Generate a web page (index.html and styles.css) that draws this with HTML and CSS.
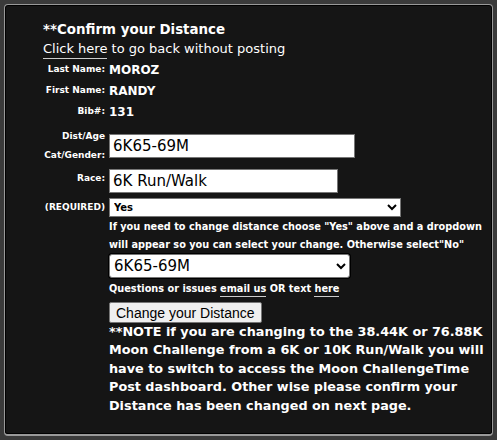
FILE: index.html
```html
<!DOCTYPE html>
<html lang="en">
<head>
  <meta charset="UTF-8">
  <meta name="viewport" content="width=device-width, initial-scale=1.0">
  <title>Confirm your Distance</title>
  <link rel="stylesheet" href="styles.css">
</head>
<body>
  <div class="panel">
    <div class="head">
      <div class="title">**Confirm your Distance</div>
      <div class="back"><a href="#" class="link">Click here</a> to go back without posting</div>
    </div>

    <div class="form">
      <div class="row info">
        <span class="lbl">Last Name:</span>
        <span class="val">MOROZ</span>
      </div>
      <div class="row info">
        <span class="lbl">First Name:</span>
        <span class="val">RANDY</span>
      </div>
      <div class="row info">
        <span class="lbl">Bib#:</span>
        <span class="val">131</span>
      </div>
      <div class="row dist">
        <span class="lbl">Dist/Age<br>Cat/Gender:</span>
        <input class="field field-dist" type="text" value="6K65-69M">
      </div>
      <div class="row race">
        <span class="lbl">Race:</span>
        <input class="field field-race" type="text" value="6K Run/Walk">
      </div>
      <div class="row req">
        <span class="lbl">(REQUIRED)</span>
        <select class="pick-yes">
          <option>Yes</option>
          <option>No</option>
        </select>
      </div>
      <div class="row">
        <span class="lbl"></span>
        <div class="rest">
          <p class="hint">If you need to change distance choose "Yes" above and a dropdown will appear so you can select your change. Otherwise select"No"</p>
          <select class="pick-dist">
            <option>6K65-69M</option>
            <option>10K65-69M</option>
            <option>38.44K65-69M</option>
            <option>76.88K65-69M</option>
          </select>
          <p class="hint ask">Questions or issues <a href="#" class="link">email us</a> OR text <a href="#" class="link">here</a></p>
          <button class="btn" type="button">Change your Distance</button>
          <p class="note">**NOTE if you are changing to the 38.44K or 76.88K Moon Challenge from a 6K or 10K Run/Walk you will have to switch to access the Moon ChallengeTime Post dashboard. Other wise please confirm your Distance has been changed on next page.</p>
        </div>
      </div>
    </div>
  </div>
</body>
</html>
```

FILE: styles.css
```css
html, body {
  margin: 0;
  background-color: #3a3a3a;
}

body {
  padding: 4px 4px 3px 4px;
  font-family: "DejaVu Sans", Verdana, sans-serif;
  color: #fff;
}

.panel {
  height: 432px;
  box-sizing: border-box;
  background-color: #151515;
  border: 1px solid #999;
  border-bottom-width: 2px;
  border-radius: 4px;
  box-shadow: inset 0 0 0 1px #000;
  padding: 15px 0 0 2px;
}

.head {
  padding-left: 36px;
  font-size: 13px;
  line-height: 19px;
}

.title {
  font-size: 13.4px;
  font-weight: bold;
}

.link {
  color: #fff;
  text-decoration: none;
  border-bottom: 1px solid #ccc;
  padding-bottom: 2px;
}

.form {
  display: flex;
  flex-direction: column;
  margin-top: 1px;
}

.row {
  display: flex;
  gap: 4px;
  align-items: flex-start;
}

.lbl {
  flex: 0 0 98px;
  text-align: right;
  font-weight: bold;
  font-size: 9px;
  line-height: 19px;
}

.info {
  height: 21px;
  align-items: center;
}

.val {
  font-weight: bold;
  font-size: 12px;
}

.dist {
  margin-top: 5px;
  align-items: center;
}

.field {
  box-sizing: border-box;
  height: 24px;
  margin: 0;
  border: 1px solid #767676;
  padding: 0 3px;
  background: #fff;
  color: #000;
  font-family: "DejaVu Sans", Verdana, sans-serif;
  font-size: 15px;
}

.field-dist {
  width: 246px;
}

.field-race {
  width: 229px;
}

.race {
  margin-top: 4px;
}

.req {
  margin-top: 5px;
  align-items: center;
}

.pick-yes {
  box-sizing: border-box;
  width: 292px;
  height: 19px;
  margin: 0;
  border: 1px solid #767676;
  border-radius: 0;
  background: #fff;
  font-family: "DejaVu Sans", Verdana, sans-serif;
  font-weight: bold;
  font-size: 10px;
  color: #000;
}

.rest {
  display: flex;
  flex-direction: column;
  align-items: flex-start;
  width: 380px;
}

.hint {
  margin: 0;
  font-weight: bold;
  font-size: 9.75px;
  line-height: 18px;
  padding-top: 1px;
}

.pick-dist {
  box-sizing: border-box;
  width: 241px;
  height: 24px;
  margin: 0 0 2px;
  border: 1px solid #767676;
  border-radius: 3px;
  box-shadow: 0 0 0 1px #000;
  background: #fff;
  color: #000;
  font-family: "DejaVu Sans", Verdana, sans-serif;
  font-size: 15px;
}

.ask {
  padding-top: 0;
}

.btn {
  margin-top: 4px;
  height: 21px;
  padding: 0 6px;
  background: #efefef;
  border: 1px solid #767676;
  border-radius: 2px;
  font-family: "Liberation Sans", Arial, sans-serif;
  font-size: 14px;
  color: #000;
}

.note {
  margin: 0;
  width: 380px;
  font-weight: bold;
  font-size: 12.8px;
  line-height: 18.4px;
}
```
